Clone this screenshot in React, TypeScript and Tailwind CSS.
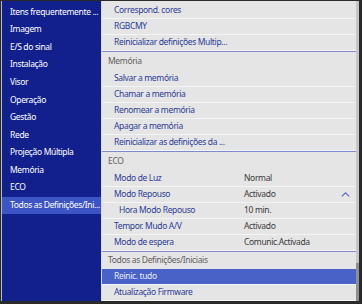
import React from 'react';

const sideItems = [
  'Itens frequentemente ...',
  'Imagem',
  'E/S do sinal',
  'Instalação',
  'Visor',
  'Operação',
  'Gestão',
  'Rede',
  'Projeção Múltipla',
  'Memória',
  'ECO',
  'Todos as Definições/Ini...',
];

type Row = { label: string; value?: string; indent?: boolean; open?: boolean; active?: boolean };
type Section = { title?: string; rows: Row[]; headerH?: string };

const sections: Section[] = [
  {
    rows: [
      { label: 'Correspond. cores' },
      { label: 'RGBCMY' },
      { label: 'Reinicializar definições Multip...' },
    ],
  },
  {
    title: 'Memória',
    rows: [
      { label: 'Salvar a memória' },
      { label: 'Chamar a memória' },
      { label: 'Renomear a memória' },
      { label: 'Apagar a memória' },
      { label: 'Reinicializar as definições da ...' },
    ],
  },
  {
    title: 'ECO',
    rows: [
      { label: 'Modo de Luz', value: 'Normal' },
      { label: 'Modo Repouso', value: 'Activado', open: true },
      { label: 'Hora Modo Repouso', value: '10 min.', indent: true },
      { label: 'Tempor. Mudo A/V', value: 'Activado' },
      { label: 'Modo de espera', value: 'Comunic.Activada' },
    ],
  },
  {
    title: 'Todos as Definições/Iniciais',
    headerH: 'h-[18px]',
    rows: [
      { label: 'Reinic. tudo', active: true },
      { label: 'Atualização Firmware' },
    ],
  },
];

const ChevronUp = () => (
  <svg width="9" height="5" viewBox="0 0 9 5" className="absolute right-[6px] top-[5px]">
    <path d="M0.8 4.4 L4.5 0.9 L8.2 4.4" fill="none" stroke="#5a6bc4" strokeWidth="1.2" />
  </svg>
);

export default function App() {
  return (
    <div
      className="w-[362px] h-[304px] flex border-[#2a2a2a] border-t border-l border-b-[3px] border-r-[3px] bg-[#e5e5e5] overflow-hidden text-[8.5px] tracking-[-0.35px] leading-none"
      style={{ fontFamily: '"Noto Sans", "Open Sans", sans-serif' }}
    >
      {/* menu lateral */}
      <div className="w-[100px] shrink-0 border-l border-[#b9b9c4] bg-[#12208e] pt-[2px]">
        {sideItems.map((s, i) => (
          <div
            key={s}
            className={`h-[17.6px] flex items-center pl-2 text-white whitespace-nowrap ${
              i === sideItems.length - 1 ? 'bg-[#3d54c6]' : ''
            }`}
          >
            {s}
          </div>
        ))}
      </div>

      <div className="w-px shrink-0 bg-[#d9dcef]" />

      {/* lista */}
      <div className="flex-1 flex flex-col pt-[2px]">
        {sections.map((sec, si) => (
          <div key={si}>
            {sec.title && (
              <div
                className={`${sec.headerH ?? 'h-[20px]'} border-t border-[#7e8acd] flex items-center pl-[6px] text-[#606060]`}
              >
                {sec.title}
              </div>
            )}
            {sec.rows.map(r => (
              <div
                key={r.label}
                className={`relative h-4 flex items-center border-b border-[#f4f4f4] whitespace-nowrap ${
                  r.active ? 'bg-[#4962c8] text-[#e6eaff]' : 'text-[#2c3b97]'
                }`}
              >
                <span className={`${r.indent ? 'pl-[17px]' : 'pl-3'} w-[142px] shrink-0`}>{r.label}</span>
                {r.value && <span className="text-[#3a3a3a]">{r.value}</span>}
                {r.open && <ChevronUp />}
              </div>
            ))}
          </div>
        ))}
      </div>

      {/* barra de rolagem */}
      <div className="w-[3px] shrink-0 bg-[#c6c6c6] flex flex-col justify-end">
        <div className="h-[38px] bg-[#8f8f8f]" />
      </div>
    </div>
  );
}
